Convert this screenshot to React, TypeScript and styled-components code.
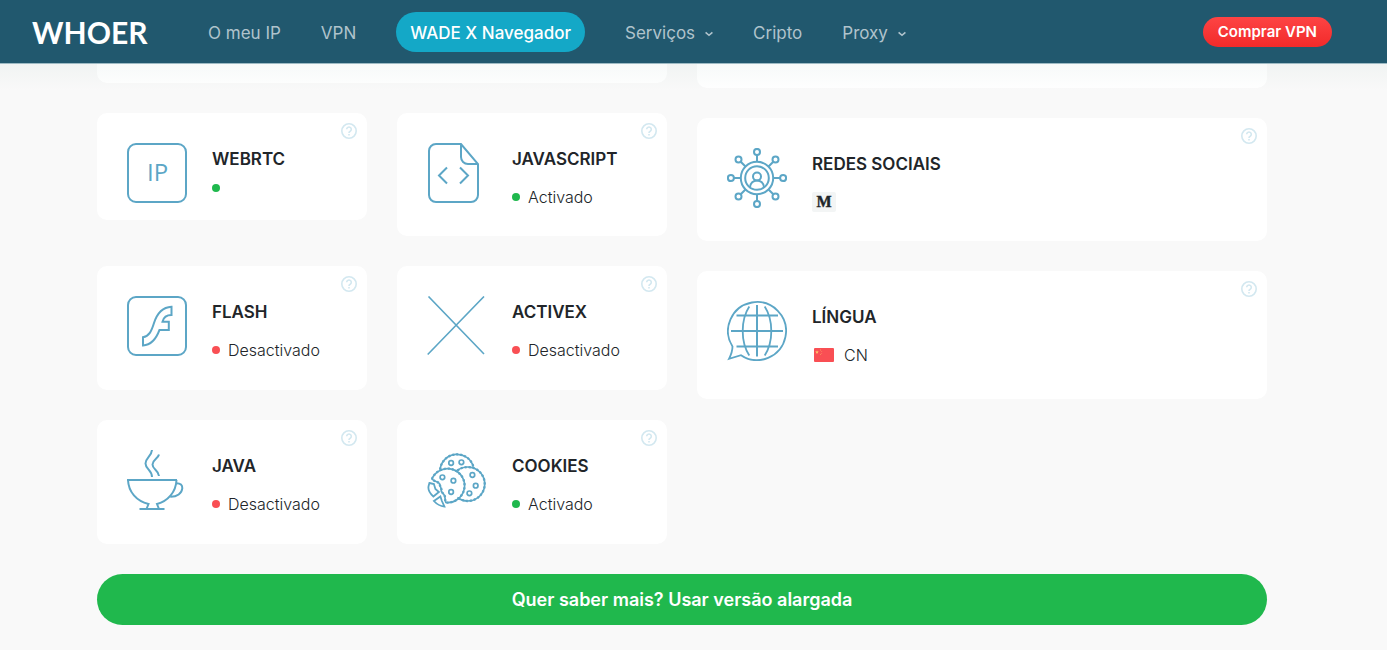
import React from "react";
import styled, { createGlobalStyle } from "styled-components";

const GlobalStyle = createGlobalStyle`
  *, *::before, *::after { box-sizing: border-box; }
  body {
    margin: 0;
    background: #f9f9f9;
    color: #212529;
    font-family: Inter, "Liberation Sans", sans-serif;
  }
`;

const Header = styled.header`
  position: relative;
  z-index: 2;
  display: flex;
  align-items: center;
  height: 64px;
  padding: 0 55px 0 32px;
  background: #21586e;
  border-bottom: 1px solid #a3bec8;
  &::after {
    content: "";
    position: absolute;
    left: 0;
    right: 0;
    top: 100%;
    height: 28px;
    background: linear-gradient(rgba(33, 110, 88, 0.04), rgba(33, 110, 88, 0));
    pointer-events: none;
  }
`;

const Logo = styled.a`
  width: 136px;
  color: #fff;
  font: 700 30px/40px Lato, sans-serif;
  text-decoration: none;
`;

const Nav = styled.nav`
  display: flex;
  align-items: center;
  gap: 40px;
  flex: 1;
  padding-left: 40px;
`;

const NavLink = styled.a<{ $active?: boolean }>`
  display: flex;
  align-items: center;
  gap: 10px;
  height: 40px;
  padding: ${(p) => (p.$active ? "2px 14px 0" : "2px 0 0")};
  border-radius: 20px;
  background: ${(p) => (p.$active ? "#14a8c7" : "transparent")};
  color: ${(p) => (p.$active ? "#fff" : "#b0c3cc")};
  font-size: 17px;
  font-weight: ${(p) => (p.$active ? 500 : 400)};
  white-space: nowrap;
  text-decoration: none;
`;

const BuyButton = styled.button`
  height: 30px;
  padding: 0 15px;
  border: 0;
  border-radius: 15px;
  background: linear-gradient(#fd4444, #f22a2a);
  color: #fff;
  font: 600 15px/30px Inter, sans-serif;
  white-space: nowrap;
`;

const Main = styled.main`
  padding: 0 23px 25px 0;
`;

const Container = styled.div`
  max-width: 1170px;
  margin: 0 auto;
`;

const Columns = styled.div`
  display: grid;
  grid-template-columns: 1fr 1fr;
  gap: 30px;
  align-items: start;
`;

const Column = styled.div`
  display: grid;
  gap: 30px;
`;

const CardEnd = styled.div<{ $height: number }>`
  height: ${(p) => p.$height}px;
  border-radius: 0 0 10px 10px;
  background: #fff;
`;

const SmallCards = styled.div`
  display: grid;
  grid-template-columns: 1fr 1fr;
  grid-template-rows: minmax(123px, auto) repeat(2, minmax(124px, auto));
  gap: 30px;
`;

const WideCards = styled.div`
  display: grid;
  grid-template-rows: minmax(123px, auto) minmax(128px, auto);
  gap: 30px;
`;

const CardBox = styled.section<{ $compact?: boolean }>`
  position: relative;
  display: flex;
  align-items: flex-start;
  gap: 25px;
  align-self: ${(p) => (p.$compact ? "start" : "stretch")};
  padding: 30px 30px 17px;
  border-radius: 10px;
  background: #fff;
`;

const CardTitle = styled.h2`
  margin: 0;
  font-size: 17px;
  font-weight: 600;
  line-height: 32px;
  white-space: nowrap;
`;

const Status = styled.div<{ $bare?: boolean }>`
  display: flex;
  align-items: center;
  gap: 8px;
  height: ${(p) => (p.$bare ? 8 : 20)}px;
  margin-top: ${(p) => (p.$bare ? 9 : 12)}px;
  font-size: 16px;
  font-weight: 300;
  line-height: 20px;
`;

const Dot = styled.span<{ $on: boolean }>`
  width: 8px;
  height: 8px;
  border-radius: 50%;
  background: ${(p) => (p.$on ? "#1fb84d" : "#f94f54")};
`;

const SocialLink = styled.a`
  display: flex;
  align-items: center;
  justify-content: center;
  width: 24px;
  height: 20px;
  border-radius: 2px;
  background: #f3f5f5;
  color: #212529;
  font: 700 16px/20px "Liberation Serif", serif;
  -webkit-text-stroke: 0.4px #212529;
  text-decoration: none;
`;

const Country = styled.span`
  display: flex;
  align-items: center;
  gap: 10px;
  padding-left: 2px;
`;

const HelpButton = styled.button`
  position: absolute;
  top: 10px;
  right: 10px;
  width: 16px;
  height: 16px;
  padding: 0;
  border: 0;
  background: none;
  svg { display: block; }
`;

const MoreButton = styled.button`
  display: block;
  width: 100%;
  height: 51px;
  margin-top: 30px;
  border: 0;
  border-radius: 26px;
  background: #20b84d;
  color: #fff;
  font: 600 18px/24px Inter, sans-serif;
`;

const IconSvg = styled.svg`
  flex: none;
  width: 60px;
  height: 60px;
  fill: none;
  stroke: #5ca6c6;
  stroke-width: 2;
`;

const Chevron = () => (
  <svg width="8" height="9" viewBox="0 0 8 9" fill="none" stroke="currentColor" strokeWidth="1.6">
    <path d="M.6 4.300 4 7.300 7.400 4.300" />
  </svg>
);

const IpIcon = () => (
  <IconSvg viewBox="0 0 60 60">
    <rect x="1" y="1" width="58" height="58" rx="8" />
    <text x="20" y="38" fontFamily="Open Sans, sans-serif" fontSize="24" fontWeight="400" fill="#5ca6c6" stroke="none">IP</text>
  </IconSvg>
);

const ScriptIcon = () => (
  <IconSvg viewBox="0 0 60 60">
    <path d="M34 1H9a7 7 0 0 0-7 7v44a7 7 0 0 0 7 7h35a7 7 0 0 0 7-7V21L34 1v13a7 7 0 0 0 7 7h10" />
    <path d="m20 24.5-8 8 8 8M33 24.5l8 8-8 8" />
  </IconSvg>
);

const FlashIcon = () => (
  <IconSvg viewBox="0 0 60 60">
    <rect x="1" y="1" width="58" height="58" rx="8" />
    <path d="M44.5 10.7V19c-5 0-8 2.600-9 6.700h6.300v8.200h-9.300C29.500 42 25 49 16 49.500v-8.300c6-1 8.500-6 11-14.200C30 17.500 35 11.200 44.500 10.700Z" />
  </IconSvg>
);

const ActiveXIcon = () => (
  <IconSvg viewBox="0 0 60 60">
    <path strokeWidth="1.600" d="M1.500 .5 57 58M57 .5.700 58.500" />
  </IconSvg>
);

const JavaIcon = () => (
  <IconSvg viewBox="0 0 60 60">
    <path d="M25 0C24.500 6.500 18.500 8 18.500 13.500S25 20 25 27M32 4.500C31 9 25.500 9.500 25.500 14.500S31.500 20 32 26" />
    <path d="M0 30h50M1 30c.5 12 8.500 21 20.500 24l-2 5M49.500 30c-.5 12-8.500 21-19.500 24l2 5M12.500 59h25" />
    <path d="M49.500 33.200c4 0 6 1.800 5.800 5-.4 5-5.300 8.800-12 8.600" />
  </IconSvg>
);

const cookieEdges = [
  "M13.700 20.500A17 17 0 0 1 47 17.800",
  "M31 21.500A17 17 0 1 1 31 48.500",
  "M5.500 30A17 17 0 1 1 19.500 53.500C18 50.500 19.500 48 17.500 45.500L15 42.500C15.500 39 13.500 37.500 13 34.500 10.500 32 8.500 33 5.500 30Z",
];

const CookiesIcon = () => (
  <IconSvg viewBox="0.6 1 60 60">
    {cookieEdges.map((d) => (
      <g key={d}>
        <path d={d} strokeWidth="1.700" />
        <path d={d} strokeWidth="2.300" strokeDasharray="2 2" />
      </g>
    ))}
    <path strokeWidth="1.800" d="M3 34l4.500 1 1.500 5 3.500 3L7 47.500Q1 42 2.200 37ZM7.500 52l6.500-4.500 1.500 4.500 2.500 5.500Q12 57 7.500 52Z" />
    <g strokeWidth="1.700">
      <circle cx="24.700" cy="14" r="2.300" />
      <circle cx="35" cy="13.300" r="2.300" />
      <circle cx="16" cy="28.300" r="2.300" />
      <circle cx="27" cy="31.700" r="2.300" />
      <circle cx="24.700" cy="43" r="2.300" />
      <circle cx="46" cy="26" r="2.300" />
      <circle cx="49.300" cy="36.700" r="2.300" />
      <circle cx="43" cy="44.300" r="2.300" />
    </g>
  </IconSvg>
);

const SocialIcon = () => (
  <IconSvg viewBox="0 0 60 60">
    <circle cx="30" cy="30" r="16.200" />
    <circle cx="30" cy="30" r="11.800" />
    <circle cx="30" cy="28.500" r="4" />
    <path d="M23 39.500c0-9.500 14-9.500 14 0" />
    {[0, 90, 180, 270].map((a) => (
      <g key={a} transform={`rotate(${a} 30 30)`}>
        <path d="M30 13.500V7" />
        <circle cx="30" cy="3.900" r="3" />
        <path d="M41.500 18.500l4.800-4.800" />
        <circle cx="48.500" cy="11.500" r="3" />
      </g>
    ))}
  </IconSvg>
);

const LanguageIcon = () => (
  <IconSvg viewBox="0 0 60 60">
    <path strokeWidth="1.800" d="M5.500 45.500A29 29 0 1 1 14 54.200Q8 56 2 57.800 5.500 51 5.500 45.500Z" />
    <path d="M30 4v51.500M4 30h52" />
    <path strokeWidth="1.800" d="M9.500 14.500h41.500M9.500 45.500h41.500M22.300 5.500C13.500 19 13.500 41 22.300 54.500M37.700 5.500C46.500 19 46.500 41 37.700 54.500" />
  </IconSvg>
);

const Flag = () => (
  <svg width="20" height="14" viewBox="0 0 20 14" aria-hidden="true">
    <rect width="20" height="14" rx="1" fill="#f94f54" />
    <path d="m3 2.300.5 1.200 1.300.1-1 .8.300 1.300L3 5l-1.100.7.3-1.300-1-.8 1.300-.1Z" fill="#ffc56b" />
    <path d="M6 1.500h1v1H6zM7.300 3h.8v.8h-.8zM7.300 5h.8v.8h-.8zM6 6.300h1v.8H6z" fill="#fb9460" />
  </svg>
);

const Help = ({ topic }: { topic: string }) => (
  <HelpButton aria-label={`Ajuda: ${topic}`}>
    <svg width="16" height="16" viewBox="0 0 16 16" fill="none" stroke="#d3e8f0" strokeWidth="1.600">
      <circle cx="8" cy="8" r="7.200" />
      <path d="M5.700 6.300a2.300 2.300 0 1 1 3.500 2C8.300 8.800 8 9.200 8 10.100M8 11v1.500" />
    </svg>
  </HelpButton>
);

type CardProps = {
  title: string;
  icon: React.ReactNode;
  compact?: boolean;
  children: React.ReactNode;
};

const Card = ({ title, icon, compact, children }: CardProps) => (
  <CardBox $compact={compact}>
    {icon}
    <div>
      <CardTitle>{title}</CardTitle>
      <Status $bare={compact}>{children}</Status>
    </div>
    <Help topic={title} />
  </CardBox>
);

const plugins = [
  { title: "WEBRTC", icon: <IpIcon />, on: true, label: "" },
  { title: "JAVASCRIPT", icon: <ScriptIcon />, on: true, label: "Activado" },
  { title: "FLASH", icon: <FlashIcon />, on: false, label: "Desactivado" },
  { title: "ACTIVEX", icon: <ActiveXIcon />, on: false, label: "Desactivado" },
  { title: "JAVA", icon: <JavaIcon />, on: false, label: "Desactivado" },
  { title: "COOKIES", icon: <CookiesIcon />, on: true, label: "Activado" },
];

export default function App() {
  return (
    <>
      <GlobalStyle />
      <Header>
        <Logo href="#">WHOER</Logo>
        <Nav>
          <NavLink href="#">O meu IP</NavLink>
          <NavLink href="#">VPN</NavLink>
          <NavLink href="#" $active>WADE X Navegador</NavLink>
          <NavLink href="#">Serviços <Chevron /></NavLink>
          <NavLink href="#">Cripto</NavLink>
          <NavLink href="#">Proxy <Chevron /></NavLink>
        </Nav>
        <BuyButton>Comprar VPN</BuyButton>
      </Header>
      <Main>
        <Container>
          <Columns>
            <Column>
              <CardEnd $height={19} />
              <SmallCards>
                {plugins.map((p) => (
                  <Card key={p.title} title={p.title} icon={p.icon} compact={!p.label}>
                    <Dot $on={p.on} />
                    {p.label && <span>{p.label}</span>}
                  </Card>
                ))}
              </SmallCards>
            </Column>
            <Column>
              <CardEnd $height={24} />
              <WideCards>
                <Card title="REDES SOCIAIS" icon={<SocialIcon />}>
                  <SocialLink href="#" aria-label="Medium">M</SocialLink>
                </Card>
                <Card title="LÍNGUA" icon={<LanguageIcon />}>
                  <Country><Flag />CN</Country>
                </Card>
              </WideCards>
            </Column>
          </Columns>
          <MoreButton>Quer saber mais? Usar versão alargada</MoreButton>
        </Container>
      </Main>
    </>
  );
}
